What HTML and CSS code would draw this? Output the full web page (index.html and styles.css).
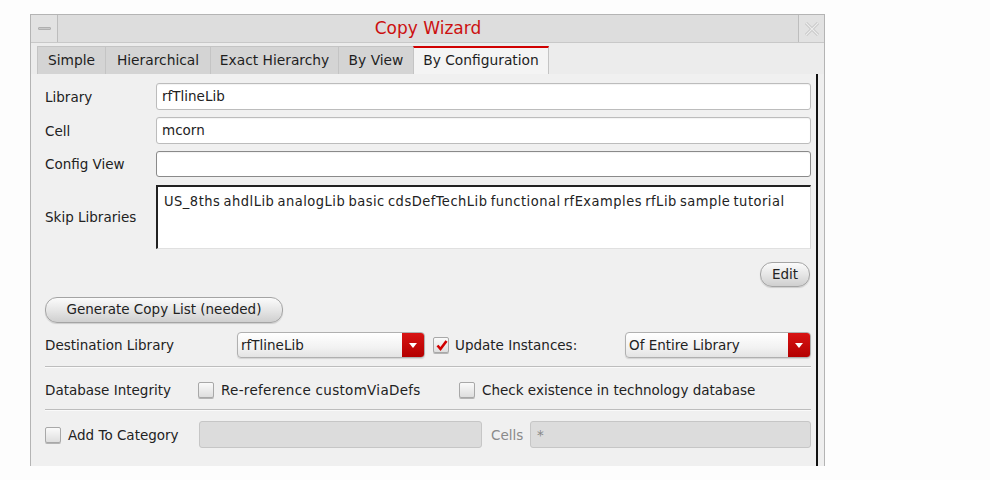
FILE: index.html
```html
<!DOCTYPE html>
<html>
<head>
<meta charset="utf-8">
<link rel="stylesheet" href="styles.css">
</head>
<body>
<div class="window">
  <div class="titlebar">
    <div class="tb-btn min"><span class="dash"></span></div>
    <div class="title">Copy Wizard</div>
    <div class="tb-btn close">
      <svg width="16" height="16" viewBox="0 0 16 16"><path d="M2 2 L14 14 M14 2 L2 14" stroke="#c4c4c4" stroke-width="3" fill="none"/><path d="M2 2 L14 14 M14 2 L2 14" stroke="#ededed" stroke-width="1.2" fill="none"/></svg>
    </div>
  </div>
  <div class="tabs">
    <div class="tab t1">Simple</div>
    <div class="tab t2">Hierarchical</div>
    <div class="tab t3">Exact Hierarchy</div>
    <div class="tab t4">By View</div>
    <div class="tab active t5">By Configuration</div>
  </div>
  <div class="content">
    <div class="row r-lib">
      <div class="label">Library</div>
      <div class="input">rfTlineLib</div>
    </div>
    <div class="row r-cell">
      <div class="label">Cell</div>
      <div class="input">mcorn</div>
    </div>
    <div class="row r-cfg">
      <div class="label">Config View</div>
      <div class="input focus"></div>
    </div>
    <div class="row r-skip">
      <div class="label">Skip Libraries</div>
      <div class="textarea">US_8ths ahdlLib analogLib basic cdsDefTechLib functional rfExamples rfLib sample tutorial</div>
    </div>
    <div class="row-edit">
      <div class="btn edit">Edit</div>
    </div>
    <div class="row-gen">
      <div class="btn gen">Generate Copy List (needed)</div>
    </div>
    <div class="row-dest">
      <div class="label dlabel">Destination Library</div>
      <div class="combo c1"><span class="ctext">rfTlineLib</span><span class="arrow"></span></div>
      <div class="check checked"><svg width="13" height="13" viewBox="0 0 13 13"><path d="M2.5 6.5 L5.5 10 L11.5 2" stroke="#d10000" stroke-width="2.6" fill="none"/></svg></div>
      <div class="ulabel">Update Instances:</div>
      <div class="combo c2"><span class="ctext">Of Entire Library</span><span class="arrow"></span></div>
    </div>
    <div class="sep"></div>
    <div class="row-db">
      <div class="label dblabel">Database Integrity</div>
      <div class="check"></div>
      <div class="cblabel rref">Re-reference customViaDefs</div>
      <div class="check"></div>
      <div class="cblabel">Check existence in technology database</div>
    </div>
    <div class="sep sep2"></div>
    <div class="row-cat">
      <div class="check"></div>
      <div class="cblabel catlabel">Add To Category</div>
      <div class="input disabled cat"></div>
      <div class="cells">Cells</div>
      <div class="input disabled cellsin">*</div>
    </div>
  </div>
</div>
</body>
</html>
```
FILE: styles.css
```css
* { box-sizing: border-box; }
body {
  margin: 0;
  background: #fdfdfd;
  font-family: "DejaVu Sans", sans-serif;
  font-size: 13.5px;
  color: #222;
}
.window {
  margin: 14px 0 0 30px;
  width: 795px;
  height: 452px;
  border: 1px solid #b4b4b4;
  border-bottom: none;
  background: #efefef;
  display: flex;
  flex-direction: column;
}
.titlebar {
  height: 28px;
  display: flex;
  background: #dddddd;
  border-bottom: 1px solid #c8c8c8;
}
.tb-btn {
  width: 27px;
  height: 27px;
  display: flex;
  align-items: center;
  justify-content: center;
  background: #e2e2e2;
}
.min { border-right: 1px solid #bdbdbd; }
.close { border-left: 1px solid #bdbdbd; width: 26px; }
.dash {
  width: 13px; height: 3px;
  background: #c8c8c8;
  border: 1px solid #b0b0b0;
  border-radius: 1px;
}
.title {
  flex: 1;
  text-align: center;
  color: #cc1010;
  font-size: 17px;
  line-height: 26px;
}
.tabs {
  display: flex;
  padding: 3px 0 0 6px;
  height: 31px;
  background: #ececec;
}
.tab {
  height: 28px;
  padding-top: 5px;
  text-align: center;
  background: #d4d4d4;
  border: 1px solid #c4c4c4;
  border-bottom: none;
  border-right: none;
  color: #1e1e1e;
  font-size: 13.8px;
}
.t1 { width: 68px; }
.t2 { width: 105px; }
.t3 { width: 128px; }
.t4 { width: 75px; }
.t5 { width: 136px; border-right: 1px solid #c4c4c4; }
.tab.active {
  background: #f4f4f4;
  border-top: 2px solid #d00000;
  padding-top: 4px;
}
.content {
  flex: 1;
  margin-right: 6px;
  border-right: 2px solid #111;
  padding: 9px 5px 0 14px;
  background: #f0f0f0;
}
.row {
  display: flex;
  align-items: center;
  margin-bottom: 7px;
}
.label { width: 111px; flex: none; }
.input {
  flex: 1;
  height: 27px;
  background: #fff;
  border: 1px solid #bcbcbc;
  border-radius: 3px;
  padding: 4px 0 0 5px;
  box-shadow: inset 0 1px 1px rgba(0,0,0,0.05);
}
.input.focus { border: 1px solid #8a8a8a; height: 26px; }
.r-cfg { margin-bottom: 8px; }
.textarea {
  flex: 1;
  height: 64px;
  background: #fff;
  border-top: 2px solid #222;
  border-left: 2px solid #222;
  border-right: 1px solid #d8d8d8;
  border-bottom: 1px solid #e0e0e0;
  padding: 6px 0 0 6px;
  font-family: "DejaVu Sans Condensed", "DejaVu Sans", sans-serif;
  font-size: 14.5px;
  letter-spacing: 0.5px;
  word-spacing: -1.5px;
}
.r-skip { margin-bottom: 13px; }
.btn {
  height: 25px;
  border: 1px solid #a4a4a4;
  border-radius: 12px;
  background: linear-gradient(#fbfbfb, #e6e6e6 50%, #cfcfcf);
  box-shadow: 0 1px 1px rgba(0,0,0,0.15);
  text-align: center;
  line-height: 22px;
  color: #222;
}
.row-edit { display: flex; justify-content: flex-end; padding-right: 1px; }
.edit { width: 50px; }
.row-gen { margin-top: 10px; }
.gen { width: 238px; height: 26px; line-height: 23px; }
.row-dest {
  display: flex;
  align-items: center;
  margin-top: 9px;
  height: 26px;
}
.dlabel { width: 192px; }
.combo {
  height: 26px;
  border: 1px solid #b0b0b0;
  border-radius: 4px;
  background: linear-gradient(#ffffff, #f2f2f2 60%, #e4e4e4);
  display: flex;
  overflow: hidden;
  box-shadow: 0 1px 1px rgba(0,0,0,0.12);
}
.ctext { flex: 1; padding: 4px 0 0 3px; }
.arrow {
  width: 22px;
  background: linear-gradient(#d81414, #b40000);
  position: relative;
}
.arrow::after {
  content: "";
  position: absolute;
  left: 7px; top: 10px;
  border-left: 4px solid transparent;
  border-right: 4px solid transparent;
  border-top: 5px solid #fff;
}
.c1 { width: 188px; }
.c2 { width: 186px; margin-left: auto; }
.check {
  width: 16px; height: 16px;
  border: 1px solid #a8a8a8;
  border-radius: 2px;
  background: linear-gradient(#fafafa, #dedede);
  box-shadow: 0 1px 0 rgba(0,0,0,0.25);
  flex: none;
  display: flex;
  align-items: center;
  justify-content: center;
}
.row-dest .check { margin-left: 8px; }
.ulabel { margin-left: 6px; }
.sep {
  height: 2px;
  border-top: 1px solid #bdbdbd;
  border-bottom: 1px solid #fafafa;
  margin-top: 8px;
}
.row-db {
  display: flex;
  align-items: center;
  height: 22px;
  margin-top: 11px;
}
.dblabel { width: 153px; }
.cblabel { margin-left: 7px; }
.rref { width: 238px; letter-spacing: 0.3px; }
.sep2 { margin-top: 8px; }
.row-cat {
  display: flex;
  align-items: center;
  margin-top: 10px;
  height: 27px;
}
.catlabel { width: 131px; }
.input.disabled {
  background: #dcdcdc;
  border: 1px solid #c6c6c6;
  color: #888;
  box-shadow: none;
}
.cat { flex: none; width: 283px; }
.cells { color: #8a8a8a; width: 48px; padding-left: 9px; }
.cellsin { padding-top: 5px; padding-left: 6px; }
```
